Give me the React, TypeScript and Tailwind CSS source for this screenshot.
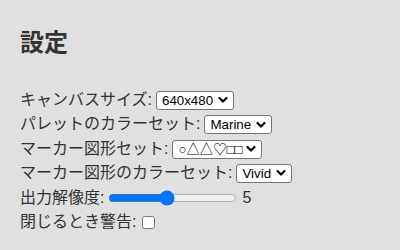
import { useState } from 'react'

const font = { fontFamily: '"Liberation Sans", "Noto Sans CJK JP", sans-serif' }

function Chevron() {
  return (
    <svg
      width="10"
      height="7"
      viewBox="0 0 10 7"
      className="pointer-events-none absolute right-[6px] top-1/2 -translate-y-1/2"
    >
      <path d="M1.5 1.5 L5 5 L8.5 1.5" fill="none" stroke="#000" strokeWidth="2.2" strokeLinecap="round" strokeLinejoin="round" />
    </svg>
  )
}

function Select({ value, width }: { value: string; width: string }) {
  return (
    <span className="relative ml-[4px] inline-block align-middle">
      <select
        className={`h-[19px] appearance-none rounded-[3px] border border-[#767676] bg-white pl-[5px] text-[13.33px] leading-[17px] text-black ${width}`}
      >
        <option>{value}</option>
      </select>
      <Chevron />
    </span>
  )
}

export default function App() {
  const [res, setRes] = useState(5)

  return (
    <div className="min-h-[250px] bg-[#e0e0e0] px-5 pt-[25px] text-[16px] text-[#333]" style={font}>
      <h2 className="mb-[27px] text-[24px] font-bold leading-[36px]">設定</h2>

      <div className="leading-[24.4px]">
        <div className="flex h-[24.4px] items-center">
          キャンバスサイズ:
          <Select value="640x480" width="w-[78px]" />
        </div>
        <div className="flex h-[24.4px] items-center">
          パレットのカラーセット:
          <Select value="Marine" width="w-[68px]" />
        </div>
        <div className="flex h-[24.4px] items-center">
          マーカー図形セット:
          <Select value="○△△♡□□" width="w-[90px]" />
        </div>
        <div className="flex h-[24.4px] items-center">
          マーカー図形のカラーセット:
          <Select value="Vivid" width="w-[56px]" />
        </div>
        <div className="flex h-[24.4px] items-center">
          出力解像度:
          <input
            type="range"
            min={1}
            max={10}
            value={res}
            onChange={(e) => setRes(Number(e.target.value))}
            className="ml-[4px] w-[129px] accent-[#0075ff]"
          />
          <span className="ml-[5px]">{res}</span>
        </div>
        <div className="flex h-[24.4px] items-center">
          閉じるとき警告:
          <input type="checkbox" className="ml-[6px] h-[13px] w-[13px]" />
        </div>
      </div>
    </div>
  )
}
